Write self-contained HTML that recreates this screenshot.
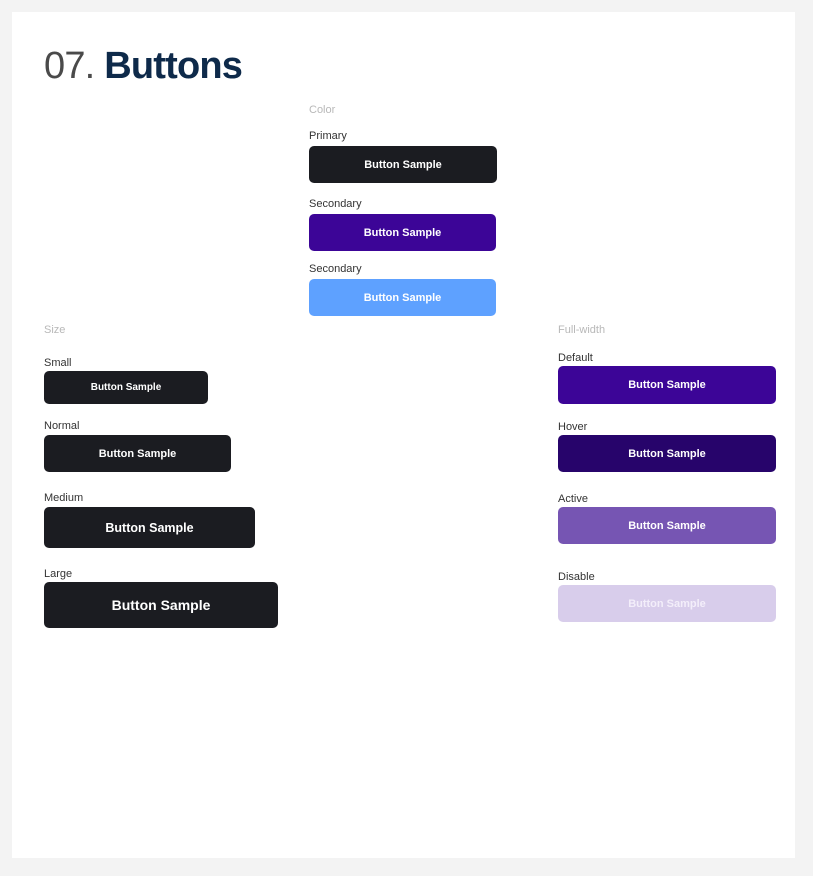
<!DOCTYPE html>
<html><head><meta charset="utf-8"><style>
*{margin:0;padding:0;box-sizing:border-box}
body{width:813px;height:876px;background:#f3f3f3;font-family:"Liberation Sans",sans-serif;position:relative;overflow:hidden}
.card{position:absolute;left:12px;top:12px;width:783px;height:846px;background:#fff}
.t{position:absolute;font-size:11px;color:#333;line-height:14px;white-space:nowrap}
.g{color:#b8b8b8}
.b{position:absolute;display:flex;align-items:center;justify-content:center;color:#fff;font-weight:bold;border-radius:5px;font-size:11px}
h1{position:absolute;left:44px;top:43px;font-size:38px;font-weight:normal;color:#4a4a4a;line-height:46px;white-space:nowrap;letter-spacing:-0.8px}
h1 b{color:#0e2a4a}
</style></head><body>
<div class="card"></div>
<h1>07. <b>Buttons</b></h1>
<div class="t g" style="left:309px;top:103px">Color</div>
<div class="t" style="left:309px;top:129px">Primary</div>
<div class="b" style="left:309px;top:146px;width:188px;height:37px;background:#1b1c21">Button Sample</div>
<div class="t" style="left:309px;top:197px">Secondary</div>
<div class="b" style="left:309px;top:214px;width:187px;height:37px;background:#3c0597">Button Sample</div>
<div class="t" style="left:309px;top:262px">Secondary</div>
<div class="b" style="left:309px;top:279px;width:187px;height:37px;background:#5ea1ff">Button Sample</div>

<div class="t g" style="left:44px;top:323px">Size</div>
<div class="t" style="left:44px;top:356px">Small</div>
<div class="b" style="left:44px;top:371px;width:164px;height:33px;background:#1b1c21;font-size:10px">Button Sample</div>
<div class="t" style="left:44px;top:419px">Normal</div>
<div class="b" style="left:44px;top:435px;width:187px;height:37px;background:#1b1c21">Button Sample</div>
<div class="t" style="left:44px;top:491px">Medium</div>
<div class="b" style="left:44px;top:507px;width:211px;height:41px;background:#1b1c21;font-size:12.5px">Button Sample</div>
<div class="t" style="left:44px;top:567px">Large</div>
<div class="b" style="left:44px;top:582px;width:234px;height:46px;background:#1b1c21;font-size:14px">Button Sample</div>

<div class="t g" style="left:558px;top:323px">Full-width</div>
<div class="t" style="left:558px;top:351px">Default</div>
<div class="b" style="left:558px;top:366px;width:218px;height:38px;background:#3c0597">Button Sample</div>
<div class="t" style="left:558px;top:420px">Hover</div>
<div class="b" style="left:558px;top:435px;width:218px;height:37px;background:#27046b">Button Sample</div>
<div class="t" style="left:558px;top:492px">Active</div>
<div class="b" style="left:558px;top:507px;width:218px;height:37px;background:#7655b3">Button Sample</div>
<div class="t" style="left:558px;top:570px">Disable</div>
<div class="b" style="left:558px;top:585px;width:218px;height:37px;background:#d8cdeb;color:#f3eefa">Button Sample</div>
</body></html>
